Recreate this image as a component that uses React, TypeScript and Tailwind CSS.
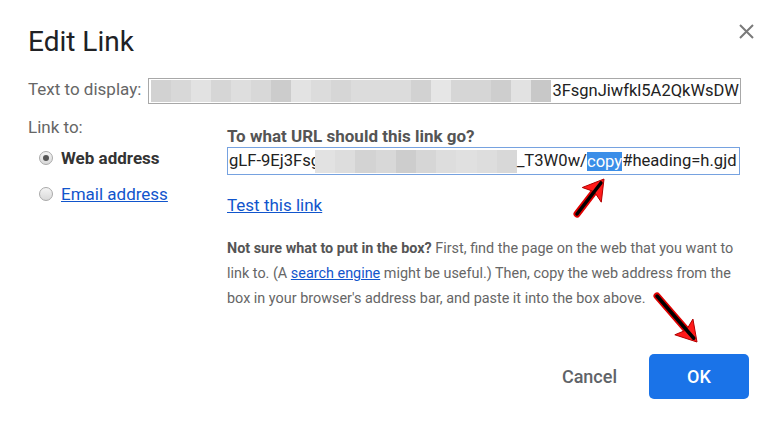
import React from 'react';

const topBlocks = [
  '#d2d2d2', '#d8d8d8', '#e2e2e2', '#d6d6d6', '#dedede', '#d8d8d8', '#cccccc', '#e3e3e3', '#dcdcdc', '#d6d6d6',
  '#dcdcdc', '#dcdcdc', '#dcdcdc', '#d2d2d2', '#e6e6e6', '#d6d6d6', '#d6d6d6', '#cecece', '#e2e2e2', '#c8c8c8',
];

const urlBlocks = ['#e2e2e2', '#dddddd', '#d3d3d3', '#d8d8d8', '#cdcdcd', '#d6d6d6', '#dddddd', '#e0e0e0', '#dddddd', '#d8d8d8'];

const Blur: React.FC<{ shades: string[]; w: number; h: number }> = ({ shades, w, h }) => (
  <div className="flex shrink-0">
    {shades.map((c, i) => (
      <div key={i} style={{ background: c, width: w, height: h }} />
    ))}
  </div>
);

const Radio: React.FC<{ checked?: boolean }> = ({ checked }) => (
  <div className="w-[14px] h-[14px] rounded-full border border-[#a9a9a9] bg-gradient-to-b from-[#f4f4f4] to-[#d9d9d9] flex items-center justify-center shrink-0">
    {checked && <div className="w-[6px] h-[6px] rounded-full bg-[#555]" />}
  </div>
);

// red-outlined black arrow, like the ones pasted on screenshots
const Arrow: React.FC<{ tail: [number, number]; tip: [number, number] }> = ({ tail, tip }) => {
  const dx = tip[0] - tail[0];
  const dy = tip[1] - tail[1];
  const len = Math.hypot(dx, dy);
  const ux = dx / len;
  const uy = dy / len;
  const px = -uy;
  const py = ux;
  const bx = tip[0] - 20 * ux;
  const by = tip[1] - 20 * uy;
  const nx = bx + 4 * ux;
  const ny = by + 4 * uy;
  const head = `${tip[0]},${tip[1]} ${bx + 12 * px},${by + 12 * py} ${nx},${ny} ${bx - 12 * px},${by - 12 * py}`;
  return (
    <g>
      <line x1={tail[0]} y1={tail[1]} x2={nx} y2={ny} stroke="#e00000" strokeWidth={7} strokeLinecap="round" />
      <polygon points={head} fill="#ff1a1a" stroke="#b00000" strokeWidth={1} strokeLinejoin="round" />
      <line x1={tail[0]} y1={tail[1]} x2={tip[0] - 5 * ux} y2={tip[1] - 5 * uy} stroke="#000" strokeWidth={3.5} strokeLinecap="round" />
    </g>
  );
};

export default function App() {
  return (
    <div
      className="relative w-[773px] h-[423px] bg-white overflow-hidden flex flex-col"
      style={{ fontFamily: 'Roboto, "Liberation Sans", sans-serif' }}
    >
      {/* header */}
      <div className="flex items-start justify-between pl-[28px] pr-[19px] pt-[23px]">
        <h1 className="mt-[5px] text-[28px] leading-[28px] text-[#202124]">Edit Link</h1>
        <svg width="15" height="15" viewBox="0 0 15 15" className="mt-[1px]">
          <path d="M1 1L14 14M14 1L1 14" stroke="#7a7a7a" strokeWidth="2" />
        </svg>
      </div>

      {/* text to display */}
      <div className="flex items-start pl-[28px] pr-[32px] mt-[22px]">
        <span className="mt-[1px] text-[17px] leading-[20px] text-[#666] whitespace-nowrap">Text to display:</span>
        <div className="ml-[7px] flex-1 h-[26px] border border-[#a8a8a8] flex items-center justify-end overflow-hidden pr-[1px]">
          <Blur shades={topBlocks} w={20} h={22} />
          <span className="ml-[1px] text-[16.5px] text-[#222] whitespace-nowrap">3FsgnJiwfkl5A2QkWsDW</span>
        </div>
      </div>

      {/* link to */}
      <div className="flex pl-[28px] pr-[33px]">
        <div className="w-[199px] shrink-0 pt-[13px]">
          <div className="text-[17px] leading-[20px] text-[#666]">Link to:</div>
          <div className="mt-[11px] ml-[11px] flex items-center gap-[8px]">
            <Radio checked />
            <span className="text-[17px] leading-[20px] font-bold text-[#333]">Web address</span>
          </div>
          <div className="mt-[16px] ml-[11px] flex items-center gap-[8px]">
            <Radio />
            <a className="text-[17px] leading-[20px] text-[#1155cc] underline">Email address</a>
          </div>
        </div>

        <div className="flex-1 min-w-0 pt-[22px]">
          <div className="text-[17px] leading-[20px] font-bold text-[#555]">To what URL should this link go?</div>
          <div className="mt-[1px] h-[28px] border border-[#76a2e0] flex items-center overflow-hidden pl-[1px] text-[16.6px] text-[#222] whitespace-nowrap">
            <span className="w-[86px] shrink-0 overflow-hidden">gLF-9Ej3Fsg</span>
            <Blur shades={urlBlocks} w={20.2} h={23} />
            <span>_T3W0w/</span>
            <span className="inline-block h-[19px] leading-[19px] bg-[#3b8ee8] text-white">copy</span>
            <span>#heading=h.gjd</span>
          </div>
          <div className="mt-[19px]">
            <a className="text-[17px] leading-[20px] text-[#1155cc] underline">Test this link</a>
          </div>
          <p className="mt-[18px] text-[14.4px] leading-[25px] text-[#666] whitespace-nowrap">
            <b className="text-[#555]">Not sure what to put in the box?</b> First, find the page on the web that you want to
            <br />
            link to. (A <a className="text-[#1155cc] underline">search engine</a> might be useful.) Then, copy the web address from the
            <br />
            box in your browser's address bar, and paste it into the box above.
          </p>
        </div>
      </div>

      {/* buttons */}
      <div className="mt-auto flex items-center justify-end gap-[16px] pr-[24px] pb-[24px]">
        <button className="px-[16px] h-[45px] text-[18px] font-medium text-[#5f6368]">Cancel</button>
        <button className="w-[100px] h-[45px] rounded-[5px] bg-[#1a73e8] text-white text-[18px] font-medium">OK</button>
      </div>

      <svg className="absolute inset-0 pointer-events-none" width="773" height="423">
        <Arrow tail={[577, 214]} tip={[604, 179]} />
        <Arrow tail={[657, 296]} tip={[697, 342]} />
      </svg>
    </div>
  );
}
